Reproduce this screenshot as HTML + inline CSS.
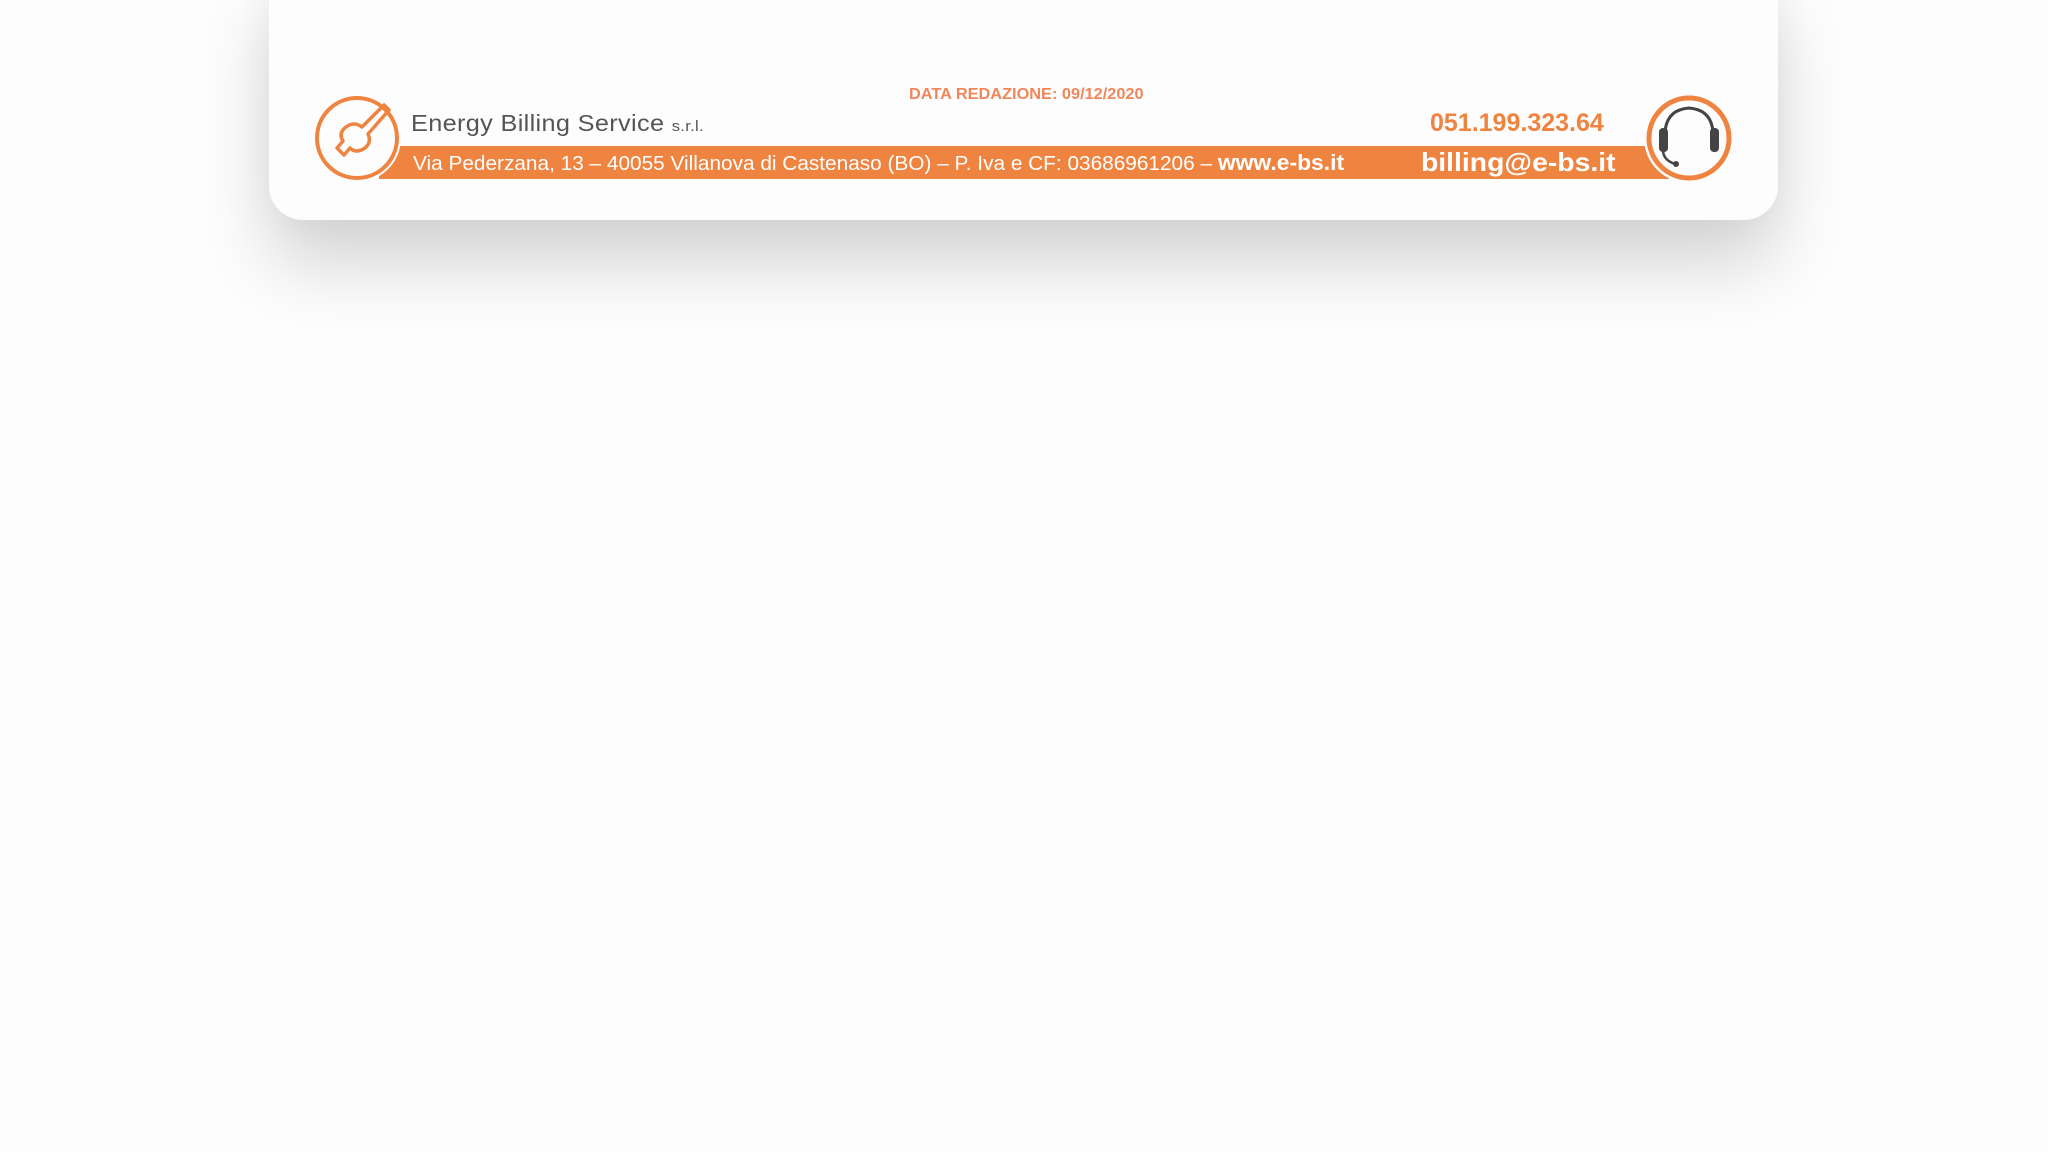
<!DOCTYPE html>
<html><head><meta charset="utf-8"><style>
html,body{margin:0;padding:0;width:2048px;height:1152px;background:#fdfdfd;overflow:hidden;font-family:"Liberation Sans",sans-serif}
.card{position:absolute;left:269px;top:-30px;width:1509px;height:250px;background:#fdfdfd;border-radius:0 0 34px 34px;box-shadow:0 45px 70px rgba(0,0,0,0.16),0 0 40px rgba(0,0,0,0.04)}
.t{position:absolute;white-space:nowrap;transform-origin:left}
</style></head><body>
<div class="card"></div>
<div class="t" style="left:909px;top:86px;font-size:16px;font-weight:bold;color:#f0875a;transform:scaleX(1.02)">DATA REDAZIONE: 09/12/2020</div>
<div style="position:absolute;left:379px;top:146px;width:1290px;height:33px;background:#ef8340"></div>
<svg style="position:absolute;left:305px;top:88px" width="120" height="100" viewBox="305 88 120 100">
<circle cx="357" cy="138" r="44" fill="#fdfdfd"/>
<circle cx="357" cy="138" r="40" fill="none" stroke="#ef8340" stroke-width="4"/>
<path d="M384 105 L389 110 L368 134 Q372 142 365 148 Q356 154 350 148 L344 155 L337 148 L343 141 Q338 133 346 127 Q354 121 362 127 Z" fill="none" stroke="#ef8340" stroke-width="3.5" stroke-linejoin="round"/>
</svg>
<div class="t" style="left:411px;top:110px;font-size:23px;color:#555;letter-spacing:0.3px;transform:scaleX(1.1)">Energy Billing Service <span style="font-size:15px">s.r.l.</span></div>
<div class="t" style="left:413px;top:150px;font-size:20px;color:#fff;transform:scaleX(1.04)">Via Pederzana, 13 – 40055 Villanova di Castenaso (BO) – P. Iva e CF: 03686961206 – <b style="font-size:22px">www.e-bs.it</b></div>
<div class="t" style="left:1430px;top:109px;font-size:25px;font-weight:bold;color:#ef8340">051.199.323.64</div>
<div class="t" style="left:1421px;top:147px;font-size:26px;font-weight:bold;color:#fff;transform:scaleX(1.09)">billing@e-bs.it</div>
<svg style="position:absolute;left:1640px;top:88px" width="100" height="100" viewBox="1640 88 100 100">
<circle cx="1689" cy="138" r="45" fill="#fdfdfd"/>
<circle cx="1689" cy="138" r="40" fill="none" stroke="#ef8340" stroke-width="5"/>
<path d="M1665 140 Q1663 110 1689 108 Q1715 110 1713 140" fill="none" stroke="#444" stroke-width="3"/>
<rect x="1659" y="128" width="9" height="24" rx="4" fill="#444"/>
<rect x="1710" y="128" width="9" height="24" rx="4" fill="#444"/>
<path d="M1663 150 Q1663 160 1675 164" fill="none" stroke="#444" stroke-width="2.5"/>
<circle cx="1676" cy="164" r="3" fill="#444"/>
</svg>
</body></html>
